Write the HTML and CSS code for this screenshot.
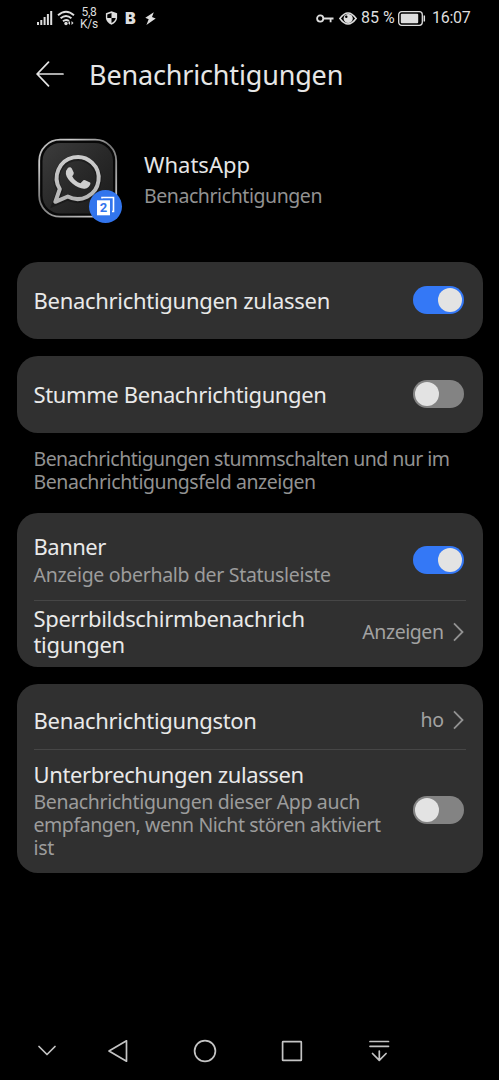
FILE: index.html
```html
<!DOCTYPE html>
<html lang="de">
<head>
<meta charset="utf-8">
<title>Benachrichtigungen</title>
<link rel="stylesheet" href="styles.css">
</head>
<body>
<div class="screen">
  <div class="status">
    <svg class="st-signal" width="17" height="15" viewBox="0 0 17 15" fill="#dedede"><path d="M0 11h2v3H0zM3.300 9h2v5h-2zM6.600 6h2v8h-2zM9.900 3h2v11h-2zM13.200 0h2v14h-2z"/></svg>
    <svg class="st-wifi" width="18" height="16" viewBox="0 0 18 16" fill="none" stroke="#dedede" stroke-width="1.900"><path d="M1 5.300Q9-2 17 5.300M3.600 8.300Q9 3.600 14.400 8.300M6 11.200Q9 8.700 12 11"/><circle cx="9" cy="13.500" r="1.700" fill="#dedede" stroke="none"/><path d="M13 11l-2 2 2 2zM14.500 11l2 2-2 2z" fill="#dedede" stroke="none"/></svg>
    <div class="speed"><span>5,8</span><span>K/s</span></div>
    <svg class="st-shield" width="13" height="14" viewBox="0 0 12 14"><path d="M6 .3L11.600 2.300V7Q11.300 11.300 6 13.700Q.7 11.300 .4 7V2.300z" fill="#dedede"/><path d="M6 2V7H1.800V3.400zM6 7H10.200Q9.800 10.200 6 12z" fill="#000"/></svg>
    <b class="st-b">B</b>
    <svg class="st-bolt" width="11" height="13" viewBox="0 0 11 13" fill="#dedede"><path d="M8.800.2L.3 5.700 3.700 7.200 1.400 12.900 10.700 6.400 7 5z"/></svg>
    <span class="grow"></span>
    <svg class="st-key" width="18" height="9" viewBox="0 0 18 9" fill="none" stroke="#dedede" stroke-width="1.800"><circle cx="4.200" cy="4.500" r="3.100"/><path d="M7.300 4.500H17.500M14.600 4.500V8.300"/></svg>
    <svg class="st-eye" width="18" height="13" viewBox="0 0 18 13"><path d="M.9 6.500Q9-4.500 17.100 6.500Q9 17.500 .9 6.500z" fill="none" stroke="#dedede" stroke-width="1.600"/><circle cx="9.200" cy="6.500" r="4.600" fill="#dedede"/><circle cx="7.300" cy="4.800" r="1.200" fill="#000"/></svg>
    <span class="st-pct">85 %</span>
    <svg class="st-bat" width="28" height="15" viewBox="0 0 28 15"><rect x=".7" y=".7" width="23.600" height="13.600" rx="3" fill="none" stroke="#dedede" stroke-width="1.300"/><rect x="2.800" y="2.800" width="17.400" height="9.400" rx="1" fill="#dedede"/><path d="M26.300 4.500v6" stroke="#dedede" stroke-width="1.500"/></svg>
    <span class="st-time">16:07</span>
  </div>

  <header class="header">
    <svg width="28" height="26" viewBox="0 0 28 26" fill="none" stroke="#e4e4e4" stroke-width="1.700" stroke-linecap="round"><path d="M1.200 13H27M12.500 1.200L1.200 13 12.500 24.800"/></svg>
    <h1>Benachrichtigungen</h1>
  </header>

  <section class="app">
    <div class="app-icon">
      <svg width="80" height="80" viewBox="0 0 80 80">
        <defs>
          <linearGradient id="rim" x1="0" y1="0" x2=".8" y2="1"><stop offset="0" stop-color="#aaa"/><stop offset=".2" stop-color="#ccc"/><stop offset=".5" stop-color="#777"/><stop offset="1" stop-color="#ccc"/></linearGradient>
          <linearGradient id="face" x1="0" y1="0" x2="1" y2="1"><stop offset="0" stop-color="#3c3c3c"/><stop offset=".5" stop-color="#292929"/><stop offset="1" stop-color="#1a1a1a"/></linearGradient>
          <linearGradient id="steel" x1="0" y1="0" x2="0" y2="1"><stop offset="0" stop-color="#ccc"/><stop offset="1" stop-color="#b4b4b4"/></linearGradient>
        </defs>
        <rect x="1.200" y="1.700" width="77" height="77" rx="21" fill="#080808" stroke="url(#rim)" stroke-width="1.800"/>
        <rect x="4.500" y="5" width="70.500" height="70.500" rx="18" fill="url(#face)"/>
        <path d="M18 63.300L22.500 50.500A21 21 0 1 1 30.500 58z" fill="none" stroke="#0b0b0b" stroke-width="6" opacity=".4" transform="translate(-.7 1.500)"/>
        <path d="M18 63.300L22.500 50.500A21 21 0 1 1 30.500 58z" fill="none" stroke="url(#steel)" stroke-width="4" stroke-linejoin="round" transform="translate(-.7 .5)"/>
        <path transform="translate(27.700 29.300) scale(.87 .85) translate(-28 -27.600)" d="M30.500 28.500C31.500 27.300 34 27.300 35 29L37.300 34Q37.700 35.500 35.500 38Q38.500 44 45 46.500L48.300 42.800Q49 42 50.500 42.800L56 45.500C57.500 47 54.500 52 51 52.500C43 54.500 29.500 43.500 28.200 35.500Q28 31 30.500 28.500z" fill="#cecece"/>
      </svg>
      <span class="badge"><svg width="33" height="33" viewBox="0 0 33 33"><path d="M13 8.600V7.500H24.500V21.500H23" fill="none" stroke="#fff" stroke-width="1.600"/><rect x="8" y="10.300" width="13" height="15" fill="#fff"/></svg><b>2</b></span>
    </div>
    <div><div class="app-name">WhatsApp</div><div class="app-sub">Benachrichtigungen</div></div>
  </section>

  <main>
    <section class="card"><div class="row single"><div class="title t-allow">Benachrichtigungen zulassen</div><span class="switch on"></span></div></section>
    <section class="card"><div class="row single"><div class="title t-mute">Stumme Benachrichtigungen</div><span class="switch"></span></div></section>
    <p class="note">Benachrichtigungen stummschalten und nur im<br><span class="note-end">Benachrichtigungsfeld anzeigen</span></p>
    <section class="card">
      <div class="row banner"><div><div class="title t-banner">Banner</div><div class="sub s-banner">Anzeige oberhalb der Statusleiste</div></div><span class="switch on"></span></div>
      <div class="row lock"><div class="title t-lock">Sperrbildschirmbenachrich<br>tigungen</div><span class="value">Anzeigen</span><svg class="chev" width="11" height="20" viewBox="0 0 11 20"><path d="M1 1.300L9.500 10 1 18.700"/></svg></div>
    </section>
    <section class="card last">
      <div class="row tone"><div class="title t-tone">Benachrichtigungston</div><span class="value">ho</span><svg class="chev" width="11" height="20" viewBox="0 0 11 20"><path d="M1 1.300L9.500 10 1 18.700"/></svg></div>
      <div class="row dnd"><div><div class="title t-dnd">Unterbrechungen zulassen</div><div class="sub s-dnd">Benachrichtigungen dieser App auch<br><span class="s-tight">empfangen, wenn Nicht stören aktiviert</span><br>ist</div></div><span class="switch"></span></div>
    </section>
  </main>

  <nav class="nav">
    <svg width="94" height="60" viewBox="0 0 94 60"><path d="M39 26.500L47 34.500 55 26.500"/></svg>
    <svg width="48" height="60" viewBox="0 0 48 60"><path d="M15 31L32.500 20.800V41.200z"/></svg>
    <svg width="126" height="60" viewBox="0 0 126 60"><circle cx="63" cy="31" r="10.400"/></svg>
    <svg width="48" height="60" viewBox="0 0 48 60"><rect x="14.600" y="21.700" width="18.700" height="18.700" rx=".5"/></svg>
    <svg width="126" height="60" viewBox="0 0 126 60"><path d="M54 21.500H72.500M54 26.300H72.500M63.300 31V40M56.500 33.500L63.300 40.300 70.100 33.500"/></svg>
  </nav>
</div>
</body>
</html>
```
FILE: styles.css
```css
* { box-sizing: border-box; }
body { margin: 0; background: #000; color: #e6e6e6; font-family: "Noto Sans", sans-serif; }
.screen { width: 499px; height: 1080px; display: flex; flex-direction: column; overflow: hidden; }
svg { display: block; flex: none; }
.grow { flex: 1; }

.status { height: 36px; flex: none; display: flex; align-items: center; padding: 0 29px 0 37px; white-space: nowrap; color: #dedede; }
.st-signal { margin-right: 3px; }
.speed { width: 18px; margin-left: 5px; display: grid; text-align: center; font: 12px/12.500px Roboto, sans-serif; letter-spacing: -.2px; }
.st-shield { margin-left: 7px; }
.st-b { margin-left: 7px; font: 900 16px/20px Inter, sans-serif; width: 13px; }
.st-bolt { margin-left: 7px; }
.st-eye { margin-left: 5px; }
.st-pct { width: 34px; margin-left: 4px; font: 16px/20px Roboto, sans-serif; }
.st-bat { margin-left: 3px; }
.st-time { width: 38px; margin-left: 6px; font: 16px/20px Roboto, sans-serif; letter-spacing: -.3px; }

.header { height: 76px; flex: none; display: flex; align-items: center; gap: 25px; padding-left: 36px; }
h1 { margin: 0; padding-top: 1px; font-size: 27px; line-height: 36px; font-weight: 400; white-space: nowrap; letter-spacing: -.17px; }

.app { height: 150px; flex: none; display: flex; gap: 26px; padding: 26px 0 0 38px; white-space: nowrap; }
.app-icon { width: 80px; height: 80px; position: relative; }
.badge { position: absolute; left: 51px; top: 52px; width: 33px; height: 33px; border-radius: 50%; background: #3275ed; }
.badge b { position: absolute; left: 8px; top: 10px; width: 13px; text-align: center; color: #3275ed; font: 700 13px/16px Roboto, sans-serif; }
.app-name { margin-top: 13px; font-size: 22px; line-height: 27px; }
.app-sub { margin-top: 6px; font-size: 19.5px; line-height: 23px; color: #929292; letter-spacing: -.43px; }

main { display: flex; flex-direction: column; padding: 0 16.500px; }
.card { background: #303030; border-radius: 21px; margin-bottom: 17px; padding: 0 17px; }
.row { display: flex; align-items: center; white-space: nowrap; }
.row > :first-child { flex: 1; }
.single { height: 77px; }
.single .switch { margin-bottom: 1px; }
.title { font-size: 22px; line-height: 26.700px; color: #e9e9e9; letter-spacing: -.33px; }
.t-allow, .t-tone { letter-spacing: -.29px; }
.t-mute, .t-dnd { letter-spacing: -.38px; }
.t-banner { letter-spacing: -.5px; }
.sub, .note, .value { font-size: 19.5px; line-height: 22.700px; color: #9c9c9c; }
.note { margin: -2px 0 20px; padding-left: 17px; color: #929292; white-space: nowrap; letter-spacing: -.54px; }
.note-end { letter-spacing: -.43px; }
.s-banner { letter-spacing: -.31px; }
.s-dnd { letter-spacing: -.35px; }
.s-tight { letter-spacing: -.43px; }
.banner { height: 88px; padding-top: 6px; border-bottom: 1px solid #464646; }
.banner .sub { margin-top: 5px; }
.lock { height: 66px; padding-bottom: 4px; }
.lock .title { padding-bottom: 2px; }
.tone { height: 66px; padding-top: 7px; border-bottom: 1px solid #464646; }
.tone .title { padding-bottom: 1px; }
.dnd { height: 123px; padding-bottom: 4px; }
.dnd .sub { margin-top: 4px; }
.value { color: #a2a2a2; margin-right: 9px; letter-spacing: -.45px; }
.chev { margin-right: 2px; fill: none; stroke: #929292; stroke-width: 1.800; }
.switch { flex: none; width: 51px; height: 28px; margin-right: 2px; padding: 2px; border-radius: 14px; background: #838383; display: flex; align-items: center; }
.switch::before { content: ""; width: 24px; height: 24px; border-radius: 50%; background: #e3e3e3; }
.switch.on { background: #3478f6; justify-content: flex-end; }

.nav { height: 60px; flex: none; margin-top: auto; display: flex; }
.nav svg { fill: none; stroke: #c4c4c4; stroke-width: 1.700; stroke-linejoin: round; stroke-linecap: round; }
```
